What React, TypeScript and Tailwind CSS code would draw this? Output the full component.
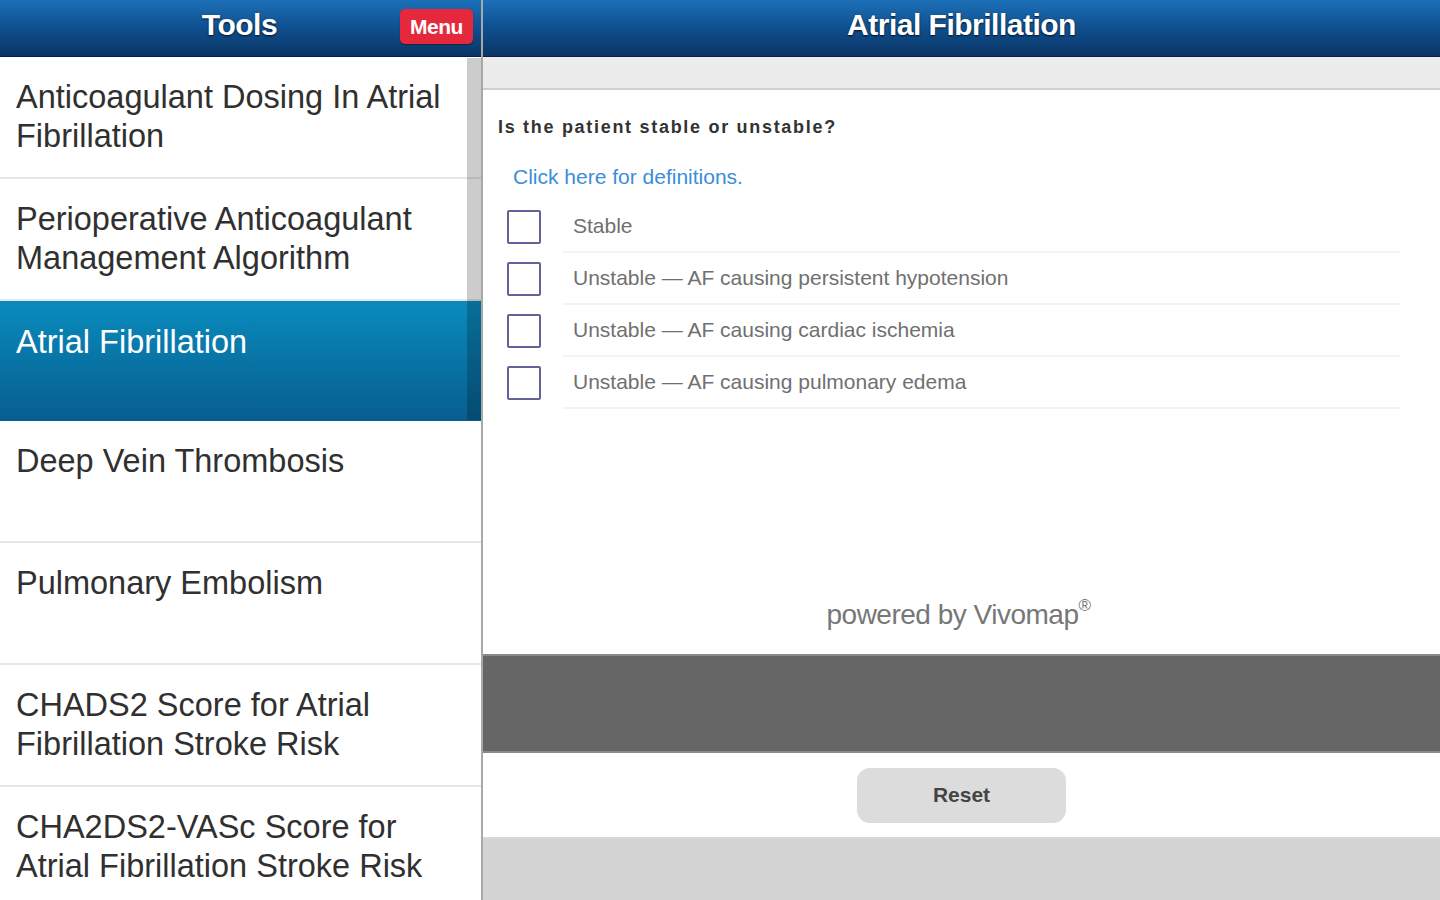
import React from 'react';

const items = [
  'Anticoagulant Dosing In Atrial Fibrillation',
  'Perioperative Anticoagulant Management Algorithm',
  'Atrial Fibrillation',
  'Deep Vein Thrombosis',
  'Pulmonary Embolism',
  'CHADS2 Score for Atrial Fibrillation Stroke Risk',
  'CHA2DS2-VASc Score for Atrial Fibrillation Stroke Risk',
];

const options = [
  'Stable',
  'Unstable — AF causing persistent hypotension',
  'Unstable — AF causing cardiac ischemia',
  'Unstable — AF causing pulmonary edema',
];

const headerCls =
  'h-[57px] bg-gradient-to-b from-[#1c70b8] via-[#0f4f8f] to-[#0a3565] border-b border-[#06203f] flex items-center justify-center pb-[8px] shrink-0';
const titleCls =
  'text-white font-bold text-[30px] tracking-[-0.5px] [text-shadow:0_1px_2px_rgba(0,0,0,0.8)]';

export default function App() {
  const selected = 2;

  return (
    <div className="w-[1440px] h-[900px] overflow-hidden flex bg-white font-['Liberation_Sans',Arial,sans-serif]">
      {/* Left: tools list */}
      <div className="w-[481px] flex flex-col shrink-0 relative">
        <div className={`${headerCls} relative`}>
          <span className={`${titleCls} -ml-[2px]`}>Tools</span>
          <button className="absolute right-[8px] top-[9px] h-[35px] w-[73px] rounded-[5px] bg-[#e6283c] text-white font-bold text-[21px] tracking-[-0.5px] shadow-[0_1px_1px_rgba(0,0,0,0.4)]">
            Menu
          </button>
        </div>
        <div className="flex-1 flex flex-col">
          {items.map((t, i) => (
            <div
              key={t}
              className={
                i === selected
                  ? 'h-[120px] shrink-0 bg-gradient-to-b from-[#0a8bbd] to-[#075e8f] px-[16px] pt-[22px] text-white text-[32.5px] leading-[39px]'
                  : 'h-[122px] shrink-0 border-b-2 border-[#e6e6e6] px-[16px] pt-[21px] text-[#303030] text-[32.5px] leading-[39px]'
              }
            >
              {t}
            </div>
          ))}
        </div>
        {/* scrollbar */}
        <div className="absolute right-0 top-[58px] w-[14px] h-[362px] bg-[rgba(0,0,0,0.2)]" />
      </div>

      {/* Right: detail */}
      <div className="flex-1 flex flex-col border-l-2 border-[#a8a8a8]">
        <div className={headerCls}>
          <span className={titleCls}>Atrial Fibrillation</span>
        </div>
        <div className="h-[33px] bg-[#ececec] border-b-2 border-[#cfcfcf] shrink-0" />
        <div className="h-[564px] flex flex-col shrink-0">
          <div className="pl-[15px] pt-[24px] text-[18px] font-bold text-[#333] tracking-[1.7px]">
            Is the patient stable or unstable?
          </div>
          <div className="pl-[30px] pt-[20px] text-[21px] text-[#3b8ed8]">
            Click here for definitions.
          </div>
          <div className="pl-[24px] pr-[40px] pt-[8px] flex flex-col">
            {options.map((o) => (
              <div key={o} className="flex items-center h-[52px]">
                <div className="w-[34px] h-[34px] border-2 border-[#62629a] rounded-[2px] shrink-0" />
                <div className="ml-[22px] flex-1 h-full flex items-center border-b-2 border-[#f3f3f3] pl-[10px] text-[21px] text-[#707070]">
                  {o}
                </div>
              </div>
            ))}
          </div>
          <div className="mt-auto pb-[18px] text-center text-[28px] text-[#777] tracking-[-0.5px] -ml-[6px]">
            powered by Vivomap<sup className="text-[17px] -top-[13px]">®</sup>
          </div>
        </div>
        <div className="h-[99px] bg-[#666666] border-y-2 border-[#8a8a8a] shrink-0" />
        <div className="h-[86px] flex items-center justify-center border-b-2 border-[#d8d8d8] shrink-0">
          <button className="w-[209px] h-[55px] rounded-[13px] bg-[#dcdcdc] text-[21px] font-bold text-[#444]">
            Reset
          </button>
        </div>
        <div className="flex-1 bg-[#d3d3d3]" />
      </div>
    </div>
  );
}
